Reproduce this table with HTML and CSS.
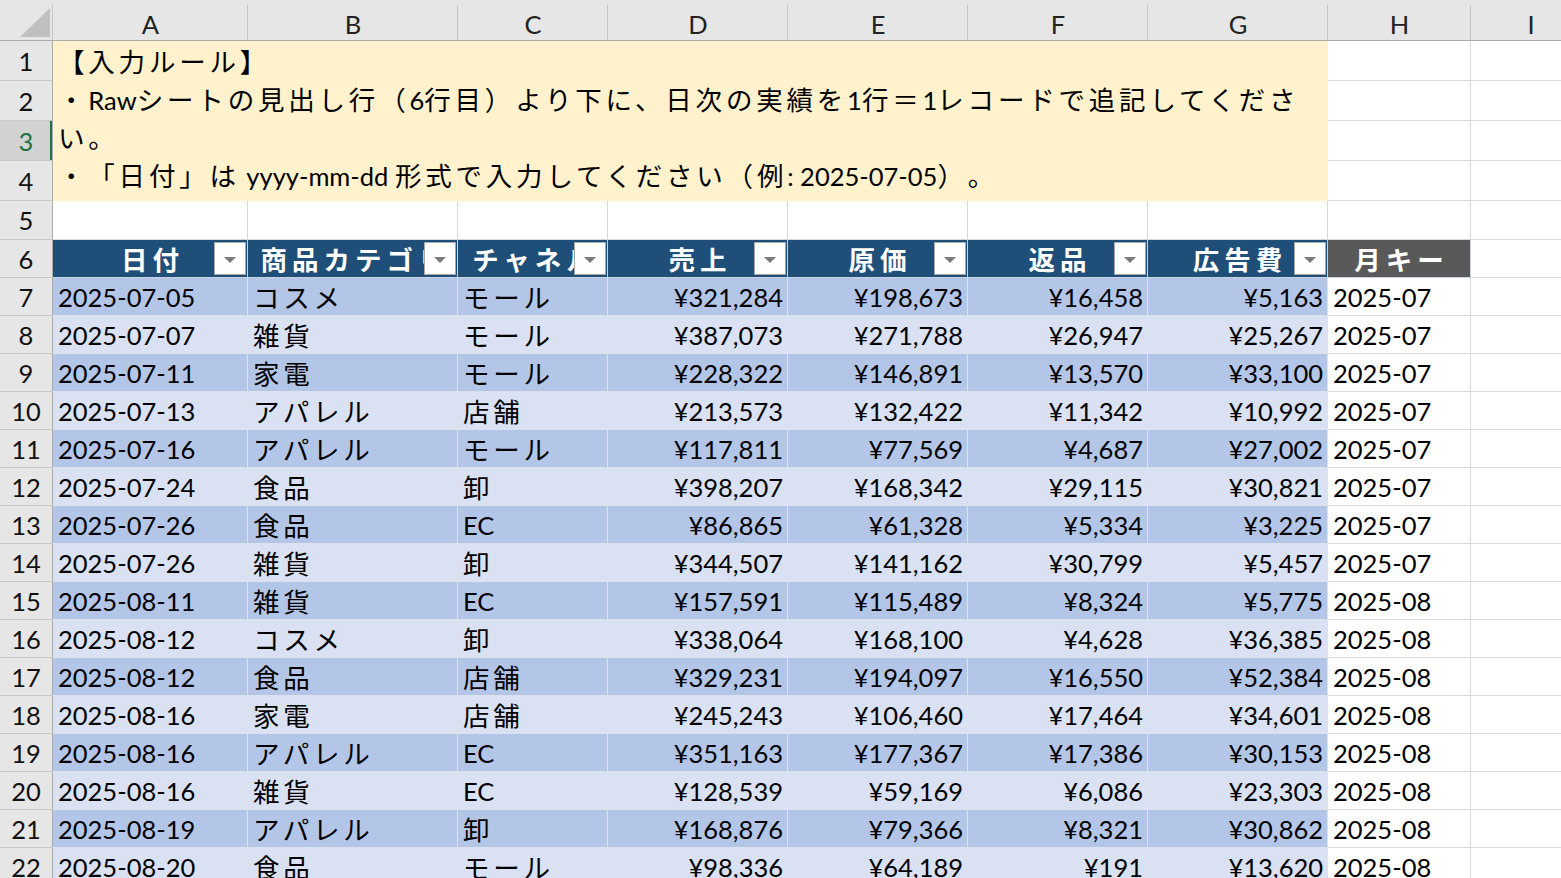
FILE: index.html
```html
<!DOCTYPE html>
<html lang="ja">
<head>
<meta charset="utf-8">
<title>Raw</title>
<link rel="stylesheet" href="styles.css">
</head>
<body>
<div class="sheet">
  <div class="ch corner"><svg width="53" height="41" viewBox="0 0 53 41"><polygon points="50,8 50,37 20,37" fill="#c0c0c0"/></svg></div>
  <div class="ch">A</div><div class="ch">B</div><div class="ch">C</div><div class="ch">D</div><div class="ch">E</div><div class="ch">F</div><div class="ch">G</div><div class="ch">H</div><div class="ch">I</div>

  <div class="rh">1</div>
  <div class="note">
    <div class="ln"><span class="j">【入力ルール】</span></div>
    <div class="ln"><span class="j">・</span>Raw<span class="j">シートの見出し行（</span>6<span class="j">行目）より下に、日次の実績を</span>1<span class="j">行＝</span>1<span class="j">レコードで追記してくださ</span></div>
    <div class="ln"><span class="j">い。</span></div>
    <div class="ln"><span class="j">・「日付」は</span> yyyy-mm-dd <span class="j">形式で入力してください（例</span>: 2025-07-05<span class="j">）。</span></div>
    <div class="ln"><span class="j">・「返品」「原価」「広告費」は税込の金額を半角数字で入力してください。</span></div>
  </div>
  <div class="c"></div><div class="c"></div>
  <div class="rh">2</div><div class="c"></div><div class="c"></div>
  <div class="rh sel">3</div><div class="c"></div><div class="c"></div>
  <div class="rh">4</div><div class="c"></div><div class="c"></div>
  <div class="rh">5</div><div class="c"></div><div class="c"></div><div class="c"></div><div class="c"></div><div class="c"></div><div class="c"></div><div class="c"></div><div class="c"></div><div class="c"></div>

  <div class="rh">6</div>
  <div class="th">日付<span class="fb"></span></div>
  <div class="th">商品カテゴリ<span class="fb"></span></div>
  <div class="th">チャネル<span class="fb"></span></div>
  <div class="th">売上<span class="fb"></span></div>
  <div class="th">原価<span class="fb"></span></div>
  <div class="th">返品<span class="fb"></span></div>
  <div class="th">広告費<span class="fb"></span></div>
  <div class="th gk">月キー</div>
  <div class="c"></div>

  <div class="rh">7</div><div class="d a">2025-07-05</div><div class="d a j">コスメ</div><div class="d a j">モール</div><div class="d a n">¥321,284</div><div class="d a n">¥198,673</div><div class="d a n">¥16,458</div><div class="d a n">¥5,163</div><div class="c t">2025-07</div><div class="c"></div>
  <div class="rh">8</div><div class="d b">2025-07-07</div><div class="d b j">雑貨</div><div class="d b j">モール</div><div class="d b n">¥387,073</div><div class="d b n">¥271,788</div><div class="d b n">¥26,947</div><div class="d b n">¥25,267</div><div class="c t">2025-07</div><div class="c"></div>
  <div class="rh">9</div><div class="d a">2025-07-11</div><div class="d a j">家電</div><div class="d a j">モール</div><div class="d a n">¥228,322</div><div class="d a n">¥146,891</div><div class="d a n">¥13,570</div><div class="d a n">¥33,100</div><div class="c t">2025-07</div><div class="c"></div>
  <div class="rh">10</div><div class="d b">2025-07-13</div><div class="d b j">アパレル</div><div class="d b j">店舗</div><div class="d b n">¥213,573</div><div class="d b n">¥132,422</div><div class="d b n">¥11,342</div><div class="d b n">¥10,992</div><div class="c t">2025-07</div><div class="c"></div>
  <div class="rh">11</div><div class="d a">2025-07-16</div><div class="d a j">アパレル</div><div class="d a j">モール</div><div class="d a n">¥117,811</div><div class="d a n">¥77,569</div><div class="d a n">¥4,687</div><div class="d a n">¥27,002</div><div class="c t">2025-07</div><div class="c"></div>
  <div class="rh">12</div><div class="d b">2025-07-24</div><div class="d b j">食品</div><div class="d b j">卸</div><div class="d b n">¥398,207</div><div class="d b n">¥168,342</div><div class="d b n">¥29,115</div><div class="d b n">¥30,821</div><div class="c t">2025-07</div><div class="c"></div>
  <div class="rh">13</div><div class="d a">2025-07-26</div><div class="d a j">食品</div><div class="d a">EC</div><div class="d a n">¥86,865</div><div class="d a n">¥61,328</div><div class="d a n">¥5,334</div><div class="d a n">¥3,225</div><div class="c t">2025-07</div><div class="c"></div>
  <div class="rh">14</div><div class="d b">2025-07-26</div><div class="d b j">雑貨</div><div class="d b j">卸</div><div class="d b n">¥344,507</div><div class="d b n">¥141,162</div><div class="d b n">¥30,799</div><div class="d b n">¥5,457</div><div class="c t">2025-07</div><div class="c"></div>
  <div class="rh">15</div><div class="d a">2025-08-11</div><div class="d a j">雑貨</div><div class="d a">EC</div><div class="d a n">¥157,591</div><div class="d a n">¥115,489</div><div class="d a n">¥8,324</div><div class="d a n">¥5,775</div><div class="c t">2025-08</div><div class="c"></div>
  <div class="rh">16</div><div class="d b">2025-08-12</div><div class="d b j">コスメ</div><div class="d b j">卸</div><div class="d b n">¥338,064</div><div class="d b n">¥168,100</div><div class="d b n">¥4,628</div><div class="d b n">¥36,385</div><div class="c t">2025-08</div><div class="c"></div>
  <div class="rh">17</div><div class="d a">2025-08-12</div><div class="d a j">食品</div><div class="d a j">店舗</div><div class="d a n">¥329,231</div><div class="d a n">¥194,097</div><div class="d a n">¥16,550</div><div class="d a n">¥52,384</div><div class="c t">2025-08</div><div class="c"></div>
  <div class="rh">18</div><div class="d b">2025-08-16</div><div class="d b j">家電</div><div class="d b j">店舗</div><div class="d b n">¥245,243</div><div class="d b n">¥106,460</div><div class="d b n">¥17,464</div><div class="d b n">¥34,601</div><div class="c t">2025-08</div><div class="c"></div>
  <div class="rh">19</div><div class="d a">2025-08-16</div><div class="d a j">アパレル</div><div class="d a">EC</div><div class="d a n">¥351,163</div><div class="d a n">¥177,367</div><div class="d a n">¥17,386</div><div class="d a n">¥30,153</div><div class="c t">2025-08</div><div class="c"></div>
  <div class="rh">20</div><div class="d b">2025-08-16</div><div class="d b j">雑貨</div><div class="d b">EC</div><div class="d b n">¥128,539</div><div class="d b n">¥59,169</div><div class="d b n">¥6,086</div><div class="d b n">¥23,303</div><div class="c t">2025-08</div><div class="c"></div>
  <div class="rh">21</div><div class="d a">2025-08-19</div><div class="d a j">アパレル</div><div class="d a j">卸</div><div class="d a n">¥168,876</div><div class="d a n">¥79,366</div><div class="d a n">¥8,321</div><div class="d a n">¥30,862</div><div class="c t">2025-08</div><div class="c"></div>
  <div class="rh">22</div><div class="d b">2025-08-20</div><div class="d b j">食品</div><div class="d b j">モール</div><div class="d b n">¥98,336</div><div class="d b n">¥64,189</div><div class="d b n">¥191</div><div class="d b n">¥13,620</div><div class="c t">2025-08</div><div class="c"></div>
</div>
</body>
</html>
```

FILE: styles.css
```css
* { box-sizing: border-box; }
html, body { margin: 0; padding: 0; }
body {
  width: 1561px;
  height: 878px;
  overflow: hidden;
  background: #fff;
  color: #000;
  font-family: "Lato", "Noto Sans CJK JP", sans-serif;
  font-size: 25.5px;
  text-spacing-trim: space-all;
}
.sheet {
  display: grid;
  grid-template-columns: 53px 195px 210px 150px 180px 180px 180px 180px 143px 120px;
  grid-template-rows: 41px 40px 40px 40px 40px 39px repeat(17, 38px);
  width: 1591px;
}
.j {
  font-family: "Noto Sans CJK JP", sans-serif;
  font-size: 26.5px;
  letter-spacing: 3.8px;
}
.ch {
  background: #e6e6e6;
  border-bottom: 1px solid #ababab;
  position: relative;
  display: flex;
  align-items: center;
  justify-content: center;
  color: #222;
  padding-top: 8px;
}
.ch::after {
  content: "";
  position: absolute;
  right: 0;
  top: 5px;
  bottom: 0;
  width: 1px;
  background: #c4c4c4;
}
.corner { padding: 0; display: block; }
.corner svg { display: block; }
.rh {
  background: #e6e6e6;
  border-bottom: 1px solid #c8c8c8;
  border-right: 1px solid #ababab;
  display: flex;
  align-items: center;
  justify-content: center;
  color: #111;
  padding-top: 0;
}
.rh.sel {
  background: #d2d2d2;
  color: #217346;
  box-shadow: inset -2px 0 0 #217346;
}
.c {
  border-right: 1px solid #d9d9d9;
  border-bottom: 1px solid #d9d9d9;
  display: flex;
  align-items: center;
  white-space: nowrap;
  overflow: hidden;
}
.c.t { padding-left: 5px; padding-top: 0; }
.note {
  grid-column: span 7;
  grid-row: span 4;
  background: #fff2cc;
  overflow: hidden;
  padding: 1px 0 0 5px;
  white-space: nowrap;
}
.ln {
  height: 38px;
  line-height: 38px;
}
.th {
  background: #1f4e78;
  color: #fff;
  font-family: "Noto Sans CJK JP", sans-serif;
  font-weight: 700;
  font-size: 26.5px;
  letter-spacing: 5px;
  text-indent: 5px;
  position: relative;
  display: flex;
  align-items: center;
  justify-content: center;
  white-space: nowrap;
  overflow: hidden;
  border-right: 1px solid #c9d2de;
  border-bottom: 1px solid #c9d2de;
}
.th.gk { background: #595959; }
.fb {
  position: absolute;
  right: 1px;
  top: 2px;
  width: 32px;
  height: 33px;
  background: #fff;
  border: 1px solid #a6a6a6;
  display: flex;
  align-items: center;
  justify-content: center;
}
.fb::before {
  content: "";
  width: 0;
  height: 0;
  border-left: 6px solid transparent;
  border-right: 6px solid transparent;
  border-top: 6px solid #7a7a7a;
  margin-top: 2px;
}
.d {
  display: flex;
  align-items: center;
  padding: 0 5px;
  white-space: nowrap;
  overflow: hidden;
  border-right: 1px solid #dde2ea;
  border-bottom: 1px solid #dde2ea;
}
.d.a { background: #b4c6e7; }
.d.b { background: #d9e1f2; }
.d.n { justify-content: flex-end; padding-right: 4px; }
```
